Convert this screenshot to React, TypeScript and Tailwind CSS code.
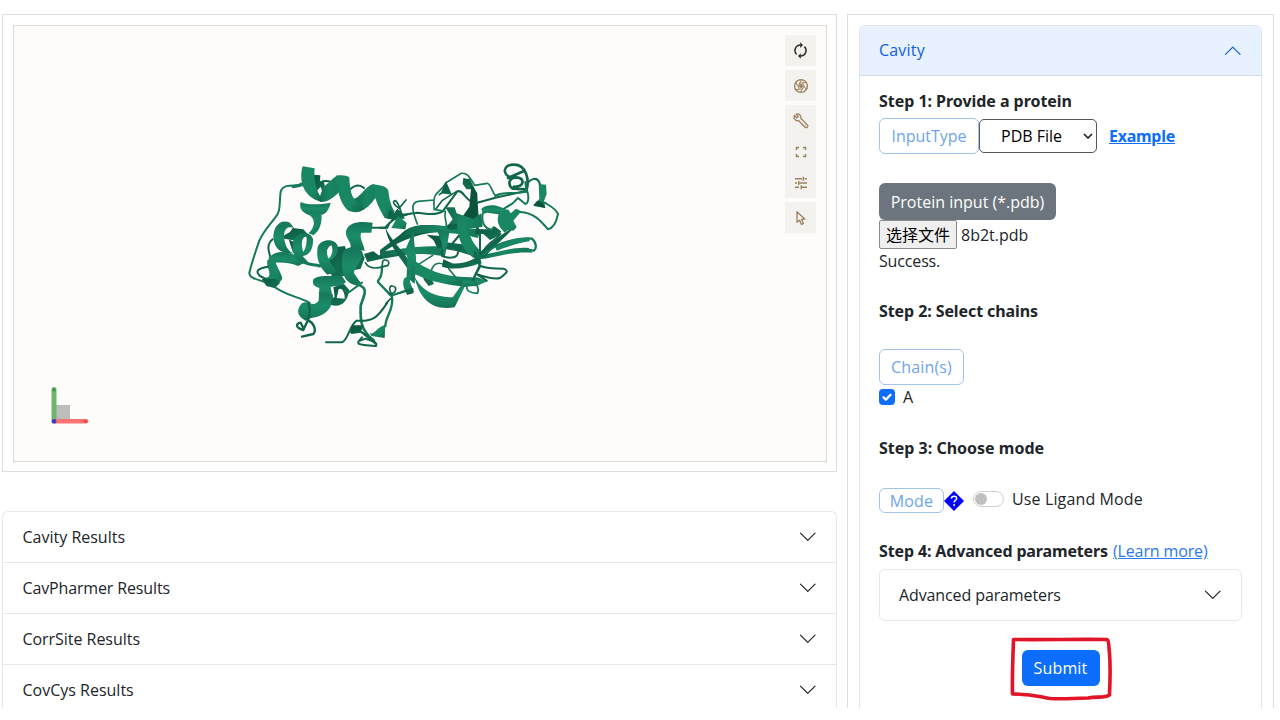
import type { ReactNode } from 'react';

function Chevron({ up = false }: { up?: boolean }) {
  return (
    <svg viewBox="0 0 16 16" className={`h-[19.5px] w-[19.5px] shrink-0 ${up ? 'rotate-180' : ''}`} fill="none" stroke="currentColor" strokeWidth="1" strokeLinecap="round" strokeLinejoin="round">
      <path d="M2 5l6 6 6-6" />
    </svg>
  );
}

function Tool({ children, className = 'text-[#9c835f]' }: { children: ReactNode; className?: string }) {
  return <div className={`flex h-[31px] w-[31px] items-center justify-center bg-[#f3f2ee] ${className}`}>{children}</div>;
}

function Toolbar() {
  return (
    <div className="absolute top-[9px] right-[10px] flex flex-col gap-1">
      <Tool className="text-[#332b1f]">
        <svg viewBox="0 0 24 24" className="h-[15px] w-[15px] overflow-visible" fill="none" stroke="currentColor" strokeWidth="2.4">
          <path d="M5.800 18.200A8.700 8.700 0 0 1 12 3.300M18.200 5.800A8.700 8.700 0 0 1 12 20.700" />
          <path d="M11.500 -1.200l4.500 4.500-4.500 4.500zM12.500 16.200l-4.500 4.500 4.500 4.500z" fill="currentColor" stroke="none" />
        </svg>
      </Tool>
      <Tool>
        <svg viewBox="0 0 16 16" className="h-4 w-4" fill="none" stroke="currentColor" strokeWidth="1.4">
          <circle cx="8" cy="8" r="6.400" />
          <path strokeWidth="1" d="M6.200 5.200 13 4.500M9.600 5.200 12.800 11.200M11 8.200 7.500 14M9.700 10.900 3 11.500M6.200 10.700 3.100 4.700M5 8 8.500 1.800" />
          <circle cx="8" cy="8" r="2" fill="currentColor" stroke="none" />
        </svg>
      </Tool>
      <div className="flex flex-col">
        <Tool>
          <svg viewBox="0 0 16 16" className="h-4 w-4 overflow-visible" fill="none" stroke="currentColor" strokeWidth="1.300" strokeLinejoin="round">
            <path d="M1.400 2.500 3.700 4.700 5.200 3.400 3.200 1.200C5.800.2 8.700 2.500 7.700 5.300L14.600 12.100C15.400 13.900 13.800 15.300 12.100 14.200L5.500 7.500C2.600 8.600 0 5.300 1.400 2.500Z" />
            <path d="M12.400 12.400h.6" strokeWidth="1.600" />
          </svg>
        </Tool>
        <Tool>
          <svg viewBox="0 0 12 12" className="h-3 w-3" fill="none" stroke="currentColor" strokeWidth="1.500">
            <path d="M1.500 4V1.500H4M8 1.500h2.500V4M10.500 8v2.500H8M4 10.500H1.500V8" />
          </svg>
        </Tool>
        <Tool>
          <svg viewBox="0 0 14 14" className="h-[14px] w-[14px]" fill="none" stroke="currentColor" strokeWidth="1.400">
            <path d="M1 2.700h7M10.500 2.700H13M9.300.7v4M1 7h2M5.500 7H13M4.700 5v4M1 11.300h4M7.500 11.300H13M7.300 9.300v4" />
          </svg>
        </Tool>
      </div>
      <Tool>
        <svg viewBox="0 0 14 16" className="h-4 w-[14px]" fill="none" stroke="currentColor" strokeWidth="1.300" strokeLinejoin="round">
          <path d="M3 1.800v10.400l2.600-2 1.900 4.200 2-.9-1.900-4.100 3.200-.4z" />
        </svg>
      </Tool>
    </div>
  );
}

const tube = { fill: 'none', stroke: '#15795a', strokeWidth: 6, strokeLinecap: 'round', strokeLinejoin: 'round' } as const;
const dark = { ...tube, stroke: '#0f664b' } as const;

function Protein() {
  return (
    <svg viewBox="14 26 812 435" className="absolute inset-0 h-full w-full">
      <defs>
        <linearGradient id="v" x1="0" y1="0" x2="0" y2="1">
          <stop offset="0" stopColor="#15755a" />
          <stop offset=".5" stopColor="#1b8d6a" />
          <stop offset="1" stopColor="#147355" />
        </linearGradient>
        <linearGradient id="h" x1="0" y1="0" x2="1" y2="0">
          <stop offset="0" stopColor="#11694e" />
          <stop offset=".5" stopColor="#198664" />
          <stop offset="1" stopColor="#157858" />
        </linearGradient>
        <linearGradient id="d" x1="0" y1="0" x2="1" y2="1">
          <stop offset="0" stopColor="#0b5640" />
          <stop offset="1" stopColor="#157658" />
        </linearGradient>
        <linearGradient id="g" x1="0" y1="0" x2="1" y2="1">
          <stop offset="0" stopColor="#1a8764" />
          <stop offset=".65" stopColor="#198664" />
          <stop offset="1" stopColor="#106449" />
        </linearGradient>
      </defs>

      {/* helical domain */}
      <g transform="translate(240 150) scale(.33333)">
        <path {...tube} d="M188 106C158 108 130 100 122 125C118 150 122 180 112 194C96 218 72 240 58 272C44 312 34 344 28 368C28 386 50 386 95 404C132 436 176 440 208 458" />
        <path {...tube} strokeWidth="10" d="M160 110Q178 108 190 100" />
        <path {...dark} d="M248 94q16-4 32 4M328 120q24-24 44-6" />
        <path fill="url(#d)" d="M220 74L241 76L240 92L252 96L256 116L240 150L228 140Z" />
        <path fill="url(#h)" d="M232 118C246 122 262 98 289 78L312 112C292 130 272 158 242 156L226 148Z" />
        <path fill="#fdfcfa" d="M231 122L242 110L246 122L240 138Z" />
        <path fill="url(#g)" d="M188 49L224 55C220 92 230 126 248 154C224 154 200 136 190 112C182 90 182 66 188 49Z" />
        <path fill="url(#h)" d="M334 146C356 154 372 110 398 103L430 112C412 124 396 184 346 186Z" />
        <path fill="url(#g)" d="M288 77C304 74 322 76 328 82C329 118 336 148 350 152L372 178C356 190 336 188 322 180C298 156 292 118 288 77Z" />
        <path fill="url(#g)" d="M396 103C420 106 440 108 445 122C448 152 456 174 464 184L450 208L434 204C418 176 406 156 396 103Z" />
        <path fill="url(#d)" d="M448 180L462 190L472 176L488 190L494 206L458 210L442 204Z" />
        <path {...dark} strokeWidth="5" d="M478 176C460 164 456 154 466 152C474 156 478 168 484 188M480 172L498 150M436 232Q446 218 470 204L508 192" />

        <path fill="url(#v)" d="M182 156C200 166 236 164 272 158C268 176 260 190 246 194L208 196C188 188 176 176 182 156Z" />
        <path fill="url(#g)" d="M200 190L244 190C248 218 238 244 220 256L206 250C224 232 232 208 200 190Z" />

        <path fill="url(#d)" d="M118 264L150 246L158 234L190 238L206 256L170 272Z" />
        <path fill="url(#v)" d="M100 262C100 226 124 206 150 218L164 236C138 222 128 246 134 272C138 294 148 304 160 310C124 314 102 296 100 262Z" />
        <path {...dark} d="M98 268C80 282 84 300 92 324" />
        <path fill="url(#v)" d="M86 322C106 306 124 300 162 314L194 338L174 348C146 336 112 336 86 340Z" />
        <path fill="url(#d)" d="M146 268L172 282L178 318L158 306Z" />
        <path fill="url(#v)" fillRule="evenodd" d="M160 272C166 246 214 240 219 268C220 296 210 316 188 318L206 338C172 350 152 314 160 272ZM190 306C200 292 202 268 198 256C182 266 184 288 190 306Z" />
        <path fill="url(#g)" d="M82 330L104 326C108 350 124 366 127 386L108 412L80 408L66 388L86 380C94 366 78 352 82 330Z" />
        <path fill="url(#d)" d="M66 388L106 386L120 400L102 414L80 408Z" />
        <path {...dark} d="M84 350C50 356 46 364 60 378L80 388" />
        <path {...tube} strokeWidth="9" d="M192 336C206 346 222 342 240 348" />

        <path fill="url(#d)" d="M284 292L315 288L330 340L326 378L276 378L264 358L290 334Z" />
        <path fill="url(#d)" d="M262 328L288 314L300 352L286 370L262 360Z" />
        <path fill="url(#v)" fillRule="evenodd" d="M233 292C240 266 290 262 294 292C294 314 280 328 268 332L290 366L262 374C236 348 228 324 233 292ZM266 326C278 314 280 298 274 286C258 294 258 310 266 326Z" />
        <path fill="url(#v)" d="M318 244C326 214 360 214 398 218L394 248L364 248C356 262 372 282 374 302L332 296C336 274 314 264 318 244Z" />
        <path {...dark} d="M397 233H436" />
        <path fill="url(#d)" d="M362 300L374 324L362 356L344 360Z" />
        <path fill="url(#v)" d="M308 312C312 286 358 286 368 308C366 340 342 350 342 370L362 398L346 406C306 398 302 350 308 312Z" />
        <path fill="url(#v)" d="M220 388C236 372 272 380 306 378L318 396C302 414 276 406 272 412L278 444L236 450L238 414C220 410 216 400 220 388Z" />
        <path fill="url(#v)" d="M236 426L278 432C282 472 258 498 214 504L196 512C168 496 170 476 186 460C204 450 214 468 228 460C238 454 240 444 236 426Z" />
        <path fill="url(#d)" fillRule="evenodd" d="M280 412L312 402L328 420C322 462 296 474 272 464L276 446L284 440ZM290 444L314 446C316 428 304 410 296 418Z" />
        <path {...tube} d="M312 422L328 426L366 398" />
        <path {...dark} strokeWidth="7" d="M206 460C216 498 202 512 190 540C166 534 166 520 182 518L190 534M206 512C222 520 230 540 220 552L186 560" />
        <path {...tube} strokeWidth="8" d="M348 402C390 414 372 432 362 468C360 520 366 540 396 568" />

        <path {...dark} d="M258 577H306C324 572 328 526 350 512C398 516 412 504 442 458" />
        <path fill="url(#d)" d="M330 546L338 526L370 526L364 542L404 568L410 588L396 576L362 548L334 552Z" />
        <path {...dark} d="M366 562C346 584 348 584 408 588C414 576 396 572 376 566L360 572" />
        <path fill="url(#g)" d="M390 550C404 554 412 530 436 524L434 564L394 558Z" />
        <path {...tube} strokeWidth="7" d="M436 528C438 494 462 480 456 440L414 396C412 384 426 396 426 350" />
        <path {...dark} strokeWidth="5" d="M376 338C390 364 424 352 444 346C454 330 430 326 428 334L426 354M456 436C442 410 452 402 466 412C470 424 462 432 446 432M456 436L496 424M438 460L452 446" />
        <path fill="url(#d)" d="M372 312L400 304L416 316L480 304L510 296V312L420 328L382 336Z" />
      </g>

      {/* sheet domain */}
      <g transform="translate(380 150) scale(.33333)">
        <path {...dark} d="M0 233H22C28 214 48 200 68 194L112 188C140 192 170 196 188 184L232 124C250 118 254 152 286 160L352 142L440 122" />
        <path {...tube} strokeWidth="5" d="M112 222C98 186 90 158 114 154L162 150C164 122 184 128 198 98L244 70C266 68 272 88 284 106L322 100C334 104 336 128 346 136L362 132M162 150V178L196 184C190 208 206 220 196 240" />
        <path {...dark} strokeWidth="5" d="M168 176L186 152L230 124M186 128L178 134" />
        <path fill="url(#d)" d="M198 94L216 134L182 130ZM250 84L266 88L284 118L260 118L248 102Z" />
        <path {...dark} strokeWidth="9" d="M266 90L286 130L292 202V250" />
        <path fill="#0c533d" d="M274 106L292 130L292 216L242 208L268 170Z" />

        <path fill="url(#g)" d="M34 234L54 198L80 218L76 238Z" />
        <path fill="url(#d)" d="M0 300L60 254C98 216 154 222 248 236L244 248C154 238 78 258 2 312Z" />
        <path fill="url(#h)" d="M84 236C128 214 190 232 250 234L302 238L294 264C220 244 134 240 70 258Z" />
        <path fill="url(#h)" d="M0 304C50 302 102 284 196 290L188 318C130 308 68 312 0 318Z" />
        <path fill="url(#d)" d="M140 254L180 258L190 276L260 284L296 300L290 322C244 306 220 300 176 294C164 290 168 272 152 264Z" />
        <path fill="url(#h)" d="M196 172H224L230 190L280 206L304 190L308 230L244 240L236 224L202 228L218 208Z" />
        <path fill="url(#d)" d="M202 224L244 220L248 242L202 238Z" />
        <path fill="url(#g)" d="M232 206C268 222 268 286 312 308L294 332C244 304 230 262 232 206Z" />
        <path fill="url(#v)" d="M170 238L208 246L202 284L194 322L184 318L186 280Z" />
        <path {...dark} strokeWidth="6" d="M186 300L186 318C206 326 228 324 232 314L240 290M236 258L216 282M300 250V320" />

        <path fill="url(#d)" d="M16 230C26 262 62 294 86 330L110 372L96 376C66 328 22 284 16 230Z" />
        <path fill="url(#v)" d="M104 234C96 272 110 298 108 340L104 402L80 380L82 322L74 304Z" />
        <path fill="url(#g)" d="M72 386L94 370L90 396L102 426L82 434C72 418 66 402 72 386Z" />
        <path fill="url(#d)" d="M74 420L100 414V430L82 434ZM124 366L150 378L162 402L146 408L132 390Z" />
        <path {...tube} strokeWidth="5" d="M36 436L74 422M102 352L158 316M154 362C160 338 178 336 192 344" />
        <path fill="url(#g)" d="M106 334C160 372 214 382 276 382L260 410C204 406 148 394 104 372Z" />
        <path fill="url(#v)" d="M102 376C126 430 176 442 218 442L248 400L266 386L224 472C154 484 118 446 102 376Z" />
        <path fill="url(#v)" d="M246 386C270 388 284 378 298 384L322 394L290 408L250 410Z" />
        <path {...tube} strokeWidth="5" d="M206 356L232 388M262 402C254 424 274 430 292 430C300 416 290 404 278 390L302 338" />
        <path fill="url(#d)" d="M190 328L216 340C252 344 276 328 300 318L304 338C262 354 218 362 186 350Z" />
        <path {...dark} strokeWidth="6" d="M284 306L300 350L278 390M292 374L320 392M302 348C326 358 346 354 370 356C386 362 384 366 360 384C340 390 314 380 294 374" />
        <path fill="url(#h)" d="M278 316C330 318 390 288 446 294L458 308C386 304 346 324 296 328Z" />
        <path fill="url(#d)" d="M298 308L360 258L410 224L386 250L350 284L308 326Z" />
        <path {...tube} strokeWidth="7" d="M310 314C336 288 396 262 456 266C470 278 470 296 462 302L432 298" />
        <path fill="url(#g)" d="M346 292C380 268 418 260 452 264L448 274C412 278 382 292 350 302Z" />
        <path {...dark} strokeWidth="5" d="M306 310C320 278 344 274 362 252" />

        <path fill="url(#d)" d="M286 238H332L342 228L364 244L356 258L330 270L310 252L286 252Z" />
        <path fill="url(#v)" d="M304 176C326 160 354 164 384 182L366 194L322 188L308 192Z" />
        <path fill="url(#g)" d="M358 186L384 178L392 190L408 176L424 184L400 212L410 232L400 242L384 240L374 248C350 226 350 206 358 186Z" />
        <path {...tube} strokeWidth="6" d="M308 192C304 214 312 236 336 240" />
        <path {...tube} strokeWidth="6" d="M420 186C462 188 482 212 504 238C522 234 530 212 534 192C526 174 510 168 494 158" />
        <path fill="url(#g)" d="M476 102L498 104L500 132L492 152L496 174L460 168L478 146Z" />
        <path fill="#0c533d" d="M460 166L496 174L486 156L472 152Z" />
        <path {...dark} strokeWidth="6" d="M438 106C448 90 470 74 480 102" />
        <path {...dark} strokeWidth="8" d="M398 84C366 76 366 44 402 44C440 44 448 92 440 118L398 116C382 104 386 84 408 82C436 82 434 112 402 110M384 84L430 64" />
        <path {...tube} strokeWidth="6" d="M346 138C374 120 402 136 442 124C448 144 444 162 436 162L414 144L398 160L372 176M436 96L440 126" />
      </g>

      {/* axis gizmo */}
      <rect x="55" y="405" width="15" height="16" fill="#bdbdbb" />
      <path d="M54 389.500V420" stroke="#6db66e" strokeWidth="5" strokeLinecap="round" />
      <path d="M55 421.300H86" stroke="#fb7472" strokeWidth="4.600" strokeLinecap="round" />
      <circle cx="54" cy="390" r="1.800" fill="#3c9b40" />
      <circle cx="85.500" cy="421.300" r="1.800" fill="#f04747" />
      <circle cx="54" cy="421.300" r="2.400" fill="#4038b8" />
    </svg>
  );
}

const results: [string, string][] = [
  ['Cavity Results', 'tracking-normal'],
  ['CavPharmer Results', 'tracking-[-0.14px]'],
  ['CorrSite Results', 'tracking-[-0.04px]'],
  ['CovCys Results', 'tracking-normal'],
];

const bold = "font-bold font-['Noto_Sans',sans-serif]";
const outline = 'flex items-center justify-center rounded-md border border-[#a3c3ea] text-[#6ea4ee]';

export default function App() {
  return (
    <div className="h-[720px] w-[1280px] overflow-hidden bg-white font-['Open_Sans','Noto_Sans_CJK_SC',sans-serif] text-[16px] leading-6 text-[#212529]">
      <div className="flex h-[708px] items-start gap-[10px] overflow-hidden pl-[2px]">
        <div className="flex w-[835px] shrink-0 flex-col pt-[14px]">
          <div className="h-[458px] border border-[#dedede] p-[10px] pr-[9px]">
            <div className="relative h-[437px] border border-[#dddad0] bg-[#fdfcfa]">
              <Protein />
              <Toolbar />
            </div>
          </div>
          <div className="mt-[39px] rounded-t-md border border-b-0 border-[#e6e7e8]">
            {results.map(([name, tracking]) => (
              <div key={name} className="flex h-[51px] items-center justify-between border-b border-[#e6e7e8] pr-[19px] pb-px pl-[19.5px]">
                <span className={tracking}>{name}</span>
                <Chevron />
              </div>
            ))}
          </div>
        </div>

        <div className="mt-[14px] h-[720px] w-[427px] shrink-0 border border-[#dedede] pt-[10px] pl-[11px]">
          <div className="h-[720px] w-[403px] rounded-t-md border border-[#e1e4e8]">
            <div className="flex h-[50px] items-center justify-between rounded-t-[5px] border-b border-[#cfdcee] bg-[#e7f1ff] pr-[19px] pl-[19px] text-[#1160dc]">
              <span className="mb-px tracking-[0.2px]">Cavity</span>
              <Chevron up />
            </div>
            <div className="flex flex-col items-start pt-[13px] pr-[19px] pl-[19px]">
              <div className={`${bold} h-6 tracking-[-0.04px]`}>Step 1: Provide a protein</div>
              <div className="mt-[5px] flex h-9 items-center">
                <div className={`${outline} h-9 w-[100px]`}>InputType</div>
                <div className="flex h-[34px] w-[118px] items-center justify-between rounded-[5px] border border-[#555] pr-[3px] pl-[21px] text-black">
                  <span>PDB File</span>
                  <svg viewBox="0 0 10 10" className="h-[10px] w-[10px]" fill="none" stroke="#111" strokeWidth="1.500"><path d="M1 3l4 4 4-4" /></svg>
                </div>
                <a className={`${bold} ml-3 text-[#0d6efd] tracking-[-0.26px] underline`}>Example</a>
              </div>
              <div className="mt-[29px] flex h-[37px] w-[177px] items-center justify-center rounded-md bg-[#6c757d] text-white">Protein input (*.pdb)</div>
              <div className="flex h-[29px] items-center">
                <div className="flex h-[29px] w-[78px] items-center justify-center rounded-[2px] border border-[#8b8b8b] bg-[#efefef] text-black">选择文件</div>
                <span className="ml-1">8b2t.pdb</span>
              </div>
              <div className="h-6 tracking-[-0.15px]">Success.</div>
              <div className={`${bold} mt-[26px] h-6 tracking-[-0.09px]`}>Step 2: Select chains</div>
              <div className={`${outline} mt-[26px] h-9 w-[85px] tracking-[0.15px]`}>Chain(s)</div>
              <div className="flex h-6 items-center gap-2">
                <div className="flex h-4 w-4 items-center justify-center rounded-[4px] bg-[#0d6efd]">
                  <svg viewBox="0 0 16 16" className="h-4 w-4" fill="none" stroke="white" strokeWidth="2.200" strokeLinecap="round" strokeLinejoin="round"><path d="M4.500 8.300l2.300 2.300 4.700-4.700" /></svg>
                </div>
                <span>A</span>
              </div>
              <div className={`${bold} mt-[27px] h-6`}>Step 3: Choose mode</div>
              <div className="mt-[28px] flex h-[25px] items-center">
                <div className={`${outline} h-[25px] w-[65px] tracking-[0.2px]`}>Mode</div>
                <svg viewBox="0 0 20 20" className="h-5 w-5" fill="none">
                  <path d="M10 0l10 10-10 10L0 10z" fill="#0000fd" />
                  <path d="M7.300 7.600C7.500 5.900 9 5.300 10.100 5.300c1.400 0 2.600.8 2.600 2.200 0 2-2.600 1.900-2.600 3.900" stroke="white" strokeWidth="1.500" />
                  <circle cx="10.100" cy="13.900" r="1" fill="white" />
                </svg>
                <div className="mb-1 ml-[9px] flex h-4 w-[31px] items-center rounded-full border border-[#d2d2d2] pl-px">
                  <div className="h-3 w-3 rounded-full bg-[#bfbfbf]" />
                </div>
                <span className="mb-1 ml-2 tracking-[0.13px]">Use Ligand Mode</span>
              </div>
              <div className="mt-[26px] flex h-6 gap-[5px] whitespace-nowrap">
                <span className={`${bold} tracking-[-0.14px]`}>Step 4: Advanced parameters</span>
                <a className="text-[#2b79ee] tracking-[-0.13px] underline">(Learn more)</a>
              </div>
              <div className="mt-[6px] flex h-[52px] w-[363px] items-center justify-between rounded-md border border-[#e6e7e8] pr-[19px] pb-px pl-[19px]">
                <span className="tracking-[-0.11px]">Advanced parameters</span>
                <Chevron />
              </div>
              <div className="relative mt-[29px] flex h-9 w-[78px] items-center justify-center self-center rounded-md bg-[#0d6efd] tracking-[0.15px] text-white">
                Submit
                <svg viewBox="1008 634 108 70" className="absolute -top-[16px] -left-[14px] h-[70px] w-[108px]" fill="none" stroke="#e11428" strokeWidth="3.600" strokeLinecap="round" strokeLinejoin="round">
                  <path d="M1013.500 639.500C1040 640 1080 639 1107 639.500C1109.500 641 1108.500 648 1109.500 653C1110.500 666 1110 684 1109.500 695C1105 698 1098 696.500 1088 698C1076 698.500 1062 699 1050 698.500C1040 697 1034 694 1012.500 694C1012 678 1013 654 1013.500 639.500Z" />
                </svg>
              </div>
            </div>
          </div>
        </div>
      </div>
    </div>
  );
}
